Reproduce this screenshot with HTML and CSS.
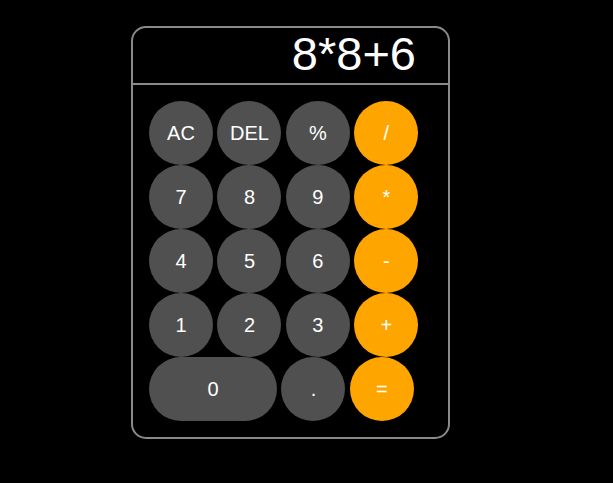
FILE: index.html
```html
<!DOCTYPE html>
<html lang="en">
<head>
<meta charset="utf-8">
<title>Calculator</title>
<link rel="stylesheet" href="styles.css">
</head>
<body>
<div class="calculator">
  <div class="display">8*8+6</div>
  <div class="keypad">
    <div class="row">
      <button class="key">AC</button>
      <button class="key">DEL</button>
      <button class="key">%</button>
      <button class="key op">/</button>
    </div>
    <div class="row">
      <button class="key">7</button>
      <button class="key">8</button>
      <button class="key">9</button>
      <button class="key op">*</button>
    </div>
    <div class="row">
      <button class="key">4</button>
      <button class="key">5</button>
      <button class="key">6</button>
      <button class="key op">-</button>
    </div>
    <div class="row">
      <button class="key">1</button>
      <button class="key">2</button>
      <button class="key">3</button>
      <button class="key op">+</button>
    </div>
    <div class="row">
      <button class="key wide">0</button>
      <button class="key">.</button>
      <button class="key op">=</button>
    </div>
  </div>
</div>
</body>
</html>
```
FILE: styles.css
```css
html, body {
  margin: 0;
  background: #000;
}
body {
  padding: 26px 0 0 131px;
  font-family: "Liberation Sans", Arial, sans-serif;
}
.calculator {
  width: 315px;
  border: 2px solid #8a8a8a;
  border-radius: 15px;
}
.display {
  height: 55px;
  line-height: 52px;
  font-size: 47px;
  color: #fff;
  text-align: right;
  padding-right: 32px;
  border-bottom: 2px solid #8a8a8a;
  white-space: nowrap;
}
.keypad {
  padding: 16px;
  display: flex;
  flex-direction: column;
}
.row {
  display: flex;
  gap: 4.45px;
}
.key {
  width: 64px;
  height: 64px;
  border: none;
  border-radius: 32px;
  background: #505050;
  color: #fff;
  font-family: "Liberation Sans", Arial, sans-serif;
  font-size: 20px;
  padding: 0;
  margin: 0;
}
.key.op {
  background: #ffa500;
}
.key.wide {
  width: 128px;
}
```
